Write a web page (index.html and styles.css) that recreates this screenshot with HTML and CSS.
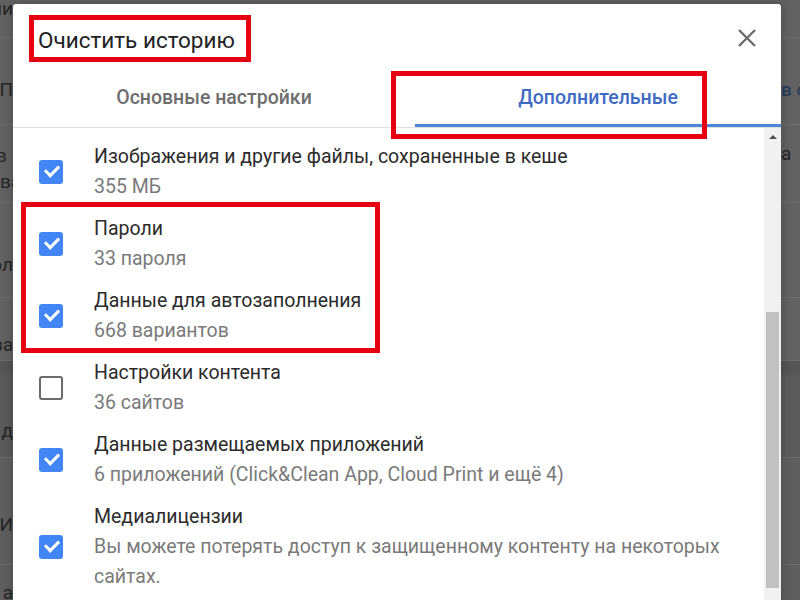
FILE: index.html
```html
<!DOCTYPE html>
<html lang="ru">
  <head>
    <meta charset="UTF-8" />
    <title>Очистить историю</title>
    <meta name="viewport" content="width=device-width, initial-scale=1.0" />
    <link rel="stylesheet" href="styles.css">
  </head>
  <body>
    <!-- затемнённая страница настроек под диалогом -->
    <div class="page">
      <div class="bg-row r1"><span class="bg-l">Пароли</span></div>
      <div class="bg-row r2"><span class="bg-l">П</span><span class="bg-r link">в с</span></div>
      <div class="bg-row r3"><span class="bg-l two">в<br>ва</span><span class="bg-r">а</span></div>
      <div class="bg-row r4"><span class="bg-l">ол</span></div>
      <div class="bg-row r5"><span class="bg-l">за</span></div>
      <div class="bg-band"></div>
      <div class="bg-row r6"><span class="bg-l">д</span></div>
      <div class="bg-row r7"><span class="bg-l">И</span></div>
      <div class="bg-row r8"><span class="bg-l">а</span></div>
    </div>

    <div class="dialog">
      <div class="dlg-head">
        <h1>Очистить историю</h1>
        <button class="close">
          <svg width="20" height="20" viewBox="0 0 20 20">
            <path d="M2 2 L18 18 M18 2 L2 18" stroke="#6b6b6b" stroke-width="2.4" fill="none" />
          </svg>
        </button>
      </div>

      <div class="tabs">
        <div class="tab basic">Основные настройки</div>
        <div class="tab active">Дополнительные</div>
      </div>

      <div class="dlg-body">
        <div class="list">
          <div class="item">
            <span class="cb checked"></span>
            <div class="txt">
              <div class="label">Изображения и другие файлы, сохраненные в кеше</div>
              <div class="sub">355 МБ</div>
            </div>
          </div>
          <div class="item">
            <span class="cb checked"></span>
            <div class="txt">
              <div class="label">Пароли</div>
              <div class="sub">33 пароля</div>
            </div>
          </div>
          <div class="item">
            <span class="cb checked"></span>
            <div class="txt">
              <div class="label">Данные для автозаполнения</div>
              <div class="sub">668 вариантов</div>
            </div>
          </div>
          <div class="item">
            <span class="cb"></span>
            <div class="txt">
              <div class="label">Настройки контента</div>
              <div class="sub">36 сайтов</div>
            </div>
          </div>
          <div class="item">
            <span class="cb checked"></span>
            <div class="txt">
              <div class="label">Данные размещаемых приложений</div>
              <div class="sub">6 приложений (Click&amp;Clean App, Cloud Print и ещё 4)</div>
            </div>
          </div>
          <div class="item">
            <span class="cb checked"></span>
            <div class="txt">
              <div class="label">Медиалицензии</div>
              <div class="sub">Вы можете потерять доступ к защищенному контенту на некоторых сайтах.</div>
            </div>
          </div>
        </div>
        <div class="scrollbar">
          <div class="arrow"></div>
          <div class="thumb"></div>
        </div>
      </div>
    </div>

    <!-- красные рамки-пометки -->
    <div class="mark mark-title"></div>
    <div class="mark mark-tab"></div>
    <div class="mark mark-items"></div>
  </body>
</html>
```

FILE: styles.css
```css
body {
  margin: 0;
  width: 800px;
  height: 600px;
  overflow: hidden;
  position: relative;
  background-color: #626262;
  font-family: Roboto, "Noto Sans", sans-serif;
}

/* фон */
.page {
  display: flex;
  flex-direction: column;
  color: #262626;
  font-size: 19px;
  line-height: 22px;
}

.bg-row {
  display: flex;
  align-items: flex-start;
  border-bottom: 1px solid #6e6e6e;
  box-sizing: border-box;
}

.bg-l {
  width: 13px;
  display: flex;
  justify-content: flex-end;
  overflow: hidden;
  white-space: nowrap;
}

.bg-l.two {
  display: block;
  text-indent: -4px;
  line-height: 26px;
}

.bg-r {
  margin-left: auto;
  width: 19px;
  overflow: hidden;
  white-space: nowrap;
}

.bg-r.link {
  color: #2c3d5e;
  font-weight: 500;
}

.r1 { height: 40px; margin-top: -2px; }
.r2 { height: 87px; padding-top: 41px; }
.r3 { height: 78px; padding-top: 18px; }
.r4 { height: 95px; padding-top: 51px; }
.r5 { height: 63px; padding-top: 36px; }
.r6 { height: 83px; padding-top: 45px; background: #5b5b5b; }
.r7 { height: 107px; padding-top: 56px; background: #5f5f5f; }
.r8 { height: 40px; padding-top: 17px; background: #5f5f5f; }

.bg-band {
  height: 14px;
  background: #555;
}

/* диалог */
.dialog {
  position: absolute;
  left: 13px;
  top: 4px;
  width: 768px;
  height: 610px;
  background: white;
  border-radius: 3px 3px 0 0;
  box-shadow: 0 0 12px rgba(0, 0, 0, 0.25);
  display: flex;
  flex-direction: column;
}

.dlg-head {
  height: 64px;
  box-sizing: border-box;
  padding: 8px 24px 0 25px;
  display: flex;
  align-items: center;
  justify-content: space-between;
}

.dlg-head h1 {
  margin: 0;
  font-size: 22.5px;
  font-weight: 400;
  color: #222;
}

.close {
  background: none;
  border: none;
  padding: 0;
  width: 20px;
  height: 20px;
  margin-top: -4px;
}

.close svg {
  display: block;
}

.tabs {
  display: flex;
  height: 60px;
  box-sizing: border-box;
  border-bottom: 1px solid #e0e0e0;
}

.tab {
  display: flex;
  align-items: center;
  justify-content: center;
  font-size: 19.5px;
  font-weight: 500;
  color: #6e6e6e;
  box-sizing: border-box;
  padding-top: 2px;
}

.tab.basic {
  width: 402px;
  padding-bottom: 3px;
}

.tab.active {
  flex: 1;
  color: #3f6bc4;
  border-bottom: 3px solid #4f86da;
}

.dlg-body {
  flex: 1;
  display: flex;
  min-height: 0;
}

.list {
  flex: 1;
  padding-top: 8px;
}

.item {
  display: flex;
  align-items: center;
  padding: 6px 20px 6px 26px;
}

.cb {
  width: 24px;
  height: 24px;
  box-sizing: border-box;
  border: 2px solid #6b6b6b;
  border-radius: 3px;
  flex-shrink: 0;
  position: relative;
}

.cb.checked {
  background: #4285f4;
  border-color: #4285f4;
}

.cb.checked::after {
  content: "";
  position: absolute;
  left: 4px;
  top: 3px;
  width: 11px;
  height: 6px;
  border-left: 3px solid white;
  border-bottom: 3px solid white;
  transform: rotate(-45deg);
}

.txt {
  margin-left: 31px;
  font-size: 19.5px;
  line-height: 30px;
}

.label {
  color: #2b2b2b;
}

.sub {
  color: #7a7a7a;
}

.scrollbar {
  width: 17px;
  background: #f1f1f1;
  display: flex;
  flex-direction: column;
  align-items: center;
}

.arrow {
  margin-top: 7px;
  width: 0;
  height: 0;
  border-left: 4px solid transparent;
  border-right: 4px solid transparent;
  border-bottom: 4px solid #505050;
}

.thumb {
  margin-top: 173px;
  width: 13px;
  height: 276px;
  background: #c1c1c1;
}

/* пометки */
.mark {
  position: absolute;
  border: 5px solid #e60012;
  box-sizing: border-box;
}

.mark-title {
  left: 29px;
  top: 15px;
  width: 222px;
  height: 47px;
}

.mark-tab {
  left: 391px;
  top: 71px;
  width: 316px;
  height: 68px;
}

.mark-items {
  left: 21px;
  top: 202px;
  width: 359px;
  height: 151px;
}
```
